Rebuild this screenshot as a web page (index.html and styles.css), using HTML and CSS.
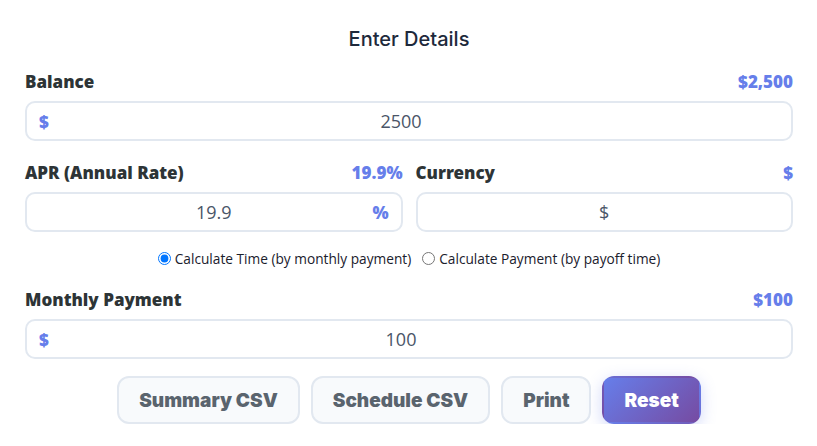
FILE: index.html
```html
<!DOCTYPE html>
<html lang="en">
<head>
<meta charset="utf-8">
<title>Enter Details</title>
<link rel="stylesheet" href="styles.css">
</head>
<body>
<div class="panel">
  <h2 class="title">Enter Details</h2>

  <div class="field">
    <div class="label-row"><span class="label">Balance</span><span class="accent">$2,500</span></div>
    <div class="input-wrap">
      <span class="affix prefix">$</span>
      <input class="input input-prefixed" type="text" value="2500">
    </div>
  </div>

  <div class="row">
    <div class="field">
      <div class="label-row"><span class="label">APR (Annual Rate)</span><span class="accent">19.9%</span></div>
      <div class="input-wrap">
        <input class="input input-sym" type="text" value="19.9">
        <span class="affix suffix">%</span>
      </div>
    </div>
    <div class="field">
      <div class="label-row"><span class="label">Currency</span><span class="accent">$</span></div>
      <div class="input-wrap">
        <input class="input input-sym" type="text" value="$">
      </div>
    </div>
  </div>

  <div class="modes">
    <label class="mode"><input type="radio" name="mode" checked> Calculate Time (by monthly payment)</label>
    <label class="mode"><input type="radio" name="mode"> Calculate Payment (by payoff time)</label>
  </div>

  <div class="field">
    <div class="label-row"><span class="label">Monthly Payment</span><span class="accent">$100</span></div>
    <div class="input-wrap">
      <span class="affix prefix">$</span>
      <input class="input input-prefixed" type="text" value="100">
    </div>
  </div>

  <div class="actions">
    <button class="btn">Summary CSV</button>
    <button class="btn">Schedule CSV</button>
    <button class="btn">Print</button>
    <button class="btn btn-primary">Reset</button>
  </div>
</div>
</body>
</html>
```

FILE: styles.css
```css
* { box-sizing: border-box; }

html, body {
  margin: 0;
  padding: 0;
  background: #ffffff;
}

.panel {
  padding: 27px 24px 0 25px;
  font-family: "Open Sans", "Noto Sans", sans-serif;
}

.title {
  margin: 0 0 20px;
  text-align: center;
  font-family: Inter, "Noto Sans", sans-serif;
  font-size: 20px;
  line-height: 24px;
  font-weight: 500;
  color: #1e293b;
}

.field {
  margin-bottom: 21px;
  min-width: 0;
}

.label-row {
  display: flex;
  justify-content: space-between;
  align-items: center;
  height: 20px;
  margin-bottom: 10px;
  font-family: "Noto Sans", sans-serif;
  font-weight: 900;
  font-size: 17px;
}

.label { color: #2d3436; }
.accent { color: #667eea; }

.input-wrap {
  position: relative;
}

.input {
  display: block;
  width: 100%;
  height: 40px;
  border: 2px solid #e2e8f0;
  border-radius: 10px;
  background: #ffffff;
  font-family: "Open Sans", "Noto Sans", sans-serif;
  font-size: 18px;
  color: #4a5568;
  text-align: center;
  outline: none;
}

.input-prefixed { padding: 0 56px 0 40px; }
.input-sym { padding: 0 40px; }

.affix {
  position: absolute;
  top: 0;
  bottom: 0;
  display: flex;
  align-items: center;
  font-family: "Noto Sans", sans-serif;
  font-weight: 900;
  font-size: 17px;
  color: #667eea;
}
.prefix { left: 14px; }
.suffix { right: 14px; }

.row {
  display: grid;
  grid-template-columns: 1fr 1fr;
  gap: 13px;
}

.modes {
  display: flex;
  justify-content: center;
  gap: 11px;
  height: 18px;
  margin: -4px 0 22px;
  font-size: 13.7px;
  color: #1a202c;
}

.mode {
  display: flex;
  align-items: center;
  gap: 4px;
}

.mode input {
  margin: 0;
  width: 13px;
  height: 13px;
}

.modes + .field { margin-bottom: 17px; }

.actions {
  display: flex;
  justify-content: center;
  gap: 11px;
}

.btn {
  height: 48px;
  padding: 0 20px;
  border: 2px solid #e2e8f0;
  border-radius: 12px;
  background: #f8fafc;
  font-family: Inter, sans-serif;
  font-weight: 900;
  font-size: 19px;
  color: #5a646e;
}

.btn-primary {
  border-color: transparent;
  background: linear-gradient(135deg, #667eea 0%, #764ba2 100%);
  color: #ffffff;
  box-shadow: 0 4px 15px rgba(102, 126, 234, 0.3);
}
```
